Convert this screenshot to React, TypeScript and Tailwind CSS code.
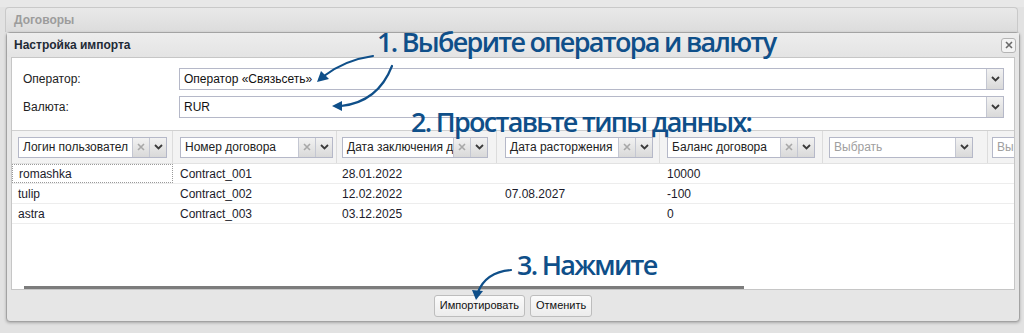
import React from "react";

const cols = [
  { w: 161, pad: 6, cw: 149, label: "Логин пользовател", clear: true },
  { w: 164, pad: 7, cw: 153, label: "Номер договора", clear: true },
  { w: 160, pad: 5, cw: 146, label: "Дата заключения д", clear: true },
  { w: 163, pad: 8, cw: 148, label: "Дата расторжения", clear: true },
  { w: 163, pad: 7, cw: 148, label: "Баланс договора", clear: true },
  { w: 165, pad: 6, cw: 144, label: "Выбрать", clear: false, ph: true },
  { w: 160, pad: 4, cw: 148, label: "Выбрать", clear: false, ph: true },
];

const rows = [
  ["romashka", "Contract_001", "28.01.2022", "", "10000"],
  ["tulip", "Contract_002", "12.02.2022", "07.08.2027", "-100"],
  ["astra", "Contract_003", "03.12.2025", "", "0"],
];

function Chevron() {
  return (
    <svg width="9" height="6" viewBox="0 0 9 6">
      <path d="M1 1 L4.5 4.5 L8 1" fill="none" stroke="#3a3a3a" strokeWidth="1.8" />
    </svg>
  );
}

function Cross({ c = "#a8a8a8" }: { c?: string }) {
  return (
    <svg width="8" height="8" viewBox="0 0 8 8">
      <path d="M1 1 L7 7 M7 1 L1 7" fill="none" stroke={c} strokeWidth="1.6" />
    </svg>
  );
}

function Trigger({ children }: { children: React.ReactNode }) {
  return (
    <div className="w-[17px] shrink-0 flex items-center justify-center bg-gradient-to-b from-[#f2f2f2] to-[#d9d9d9] border-l border-[#c4c7d2]">
      {children}
    </div>
  );
}

function Combo({ col }: { col: (typeof cols)[number] }) {
  return (
    <div
      className="flex h-[21px] border border-[#b5b8c8] bg-white overflow-hidden shrink-0"
      style={{ width: col.cw }}
    >
      <div
        className={
          "flex-1 min-w-0 pl-[4px] flex items-center whitespace-nowrap overflow-hidden text-[12px] " +
          (col.ph ? "text-[#a0a0a0]" : "text-[#222]")
        }
      >
        {col.label}
      </div>
      {col.clear && (
        <Trigger>
          <Cross />
        </Trigger>
      )}
      <Trigger>
        <Chevron />
      </Trigger>
    </div>
  );
}

function FormRow({ label, value }: { label: string; value: string }) {
  return (
    <div className="flex items-center h-[22px]">
      <div className="w-[167px] pl-[11px] text-[12px] text-[#222]">{label}</div>
      <div className="flex-1 flex h-[22px] border border-[#b5b8c8] bg-white mr-[10px]">
        <div className="flex-1 pl-[4px] flex items-center text-[12px] text-[#111]">{value}</div>
        <Trigger>
          <Chevron />
        </Trigger>
      </div>
    </div>
  );
}

const annot =
  "absolute text-[27px] font-semibold text-[#0f4f89] whitespace-nowrap leading-none tracking-[-1.7px]";

export default function App() {
  return (
    <div
      className="relative w-[1024px] h-[333px] overflow-hidden bg-[#e2e2e2]"
      style={{ fontFamily: '"Liberation Sans", Arial, sans-serif' }}
    >
      <div className="h-[7px] bg-[#e8e8e8]" />
      {/* outer panel header */}
      <div className="ml-[5px] mr-[6px] h-[25px] rounded-t-[4px] border border-[#c9c9c9] border-b-0 bg-gradient-to-b from-[#e9e9e9] to-[#dcdcdc] flex items-center pl-[8px]">
        <span className="text-[12px] font-bold text-[#9c9c9c]">Договоры</span>
      </div>
      {/* dialog */}
      <div className="ml-[6px] mr-[4px] h-[290px] flex flex-col rounded-[4px] border border-[#a3a3a3] bg-[#e6e6e6] shadow-[0_1px_3px_rgba(0,0,0,0.25)]">
        <div className="h-[24px] flex items-center justify-between pl-[7px] pr-[3px] bg-gradient-to-b from-[#ededed] to-[#e4e4e4]">
          <span className="text-[12px] font-bold text-[#1e2a36]">Настройка импорта</span>
          <div className="w-[15px] h-[15px] rounded-[3px] border border-[#b4b4b4] bg-[#f4f4f4] flex items-center justify-center">
            <Cross c="#6a6a6a" />
          </div>
        </div>
        <div className="flex-1 mx-[4px] flex flex-col bg-white border border-[#c6c6c6] overflow-hidden">
          <div className="pt-[10px] flex flex-col gap-[6px]">
            <FormRow label="Оператор:" value="Оператор «Связьсеть»" />
            <FormRow label="Валюта:" value="RUR" />
          </div>
          {/* grid */}
          <div className="mt-[12px] border-t border-[#d0d0d0] flex flex-col">
            <div className="flex h-[33px] bg-[#f3f3f3] border-b border-[#e2e2e2]">
              {cols.map((c, i) => (
                <div
                  key={i}
                  className="shrink-0 flex items-center border-r border-[#dcdcdc]"
                  style={{ width: c.w, paddingLeft: c.pad }}
                >
                  <Combo col={c} />
                </div>
              ))}
            </div>
            {rows.map((r, ri) => (
              <div key={ri} className="flex h-[20px] border-b border-[#ededed]">
                {cols.map((c, i) => (
                  <div
                    key={i}
                    className={
                      "shrink-0 flex items-center text-[12px] text-[#1b1b2b] whitespace-nowrap " +
                      (ri === 0 && i === 0 ? "border border-dotted border-[#9a9a9a]" : "")
                    }
                    style={{ width: c.w, paddingLeft: c.pad }}
                  >
                    {r[i] ?? ""}
                  </div>
                ))}
              </div>
            ))}
          </div>
          <div className="flex-1" />
          <div className="h-[3px] ml-[12px] w-[720px] bg-[#7c7c7c]" />
        </div>
        <div className="h-[31px] flex items-center justify-center gap-[5px]">
          <button className="h-[22px] px-[5px] rounded-[3px] border border-[#bdbdbd] bg-gradient-to-b from-[#fbfbfb] to-[#ececec] text-[11px] text-[#111]">
            Импортировать
          </button>
          <button className="h-[22px] px-[5px] rounded-[3px] border border-[#bdbdbd] bg-gradient-to-b from-[#fbfbfb] to-[#ececec] text-[11px] text-[#111]">
            Отменить
          </button>
        </div>
      </div>

      {/* annotations */}
      <div className={annot + " left-[377px] top-[28px]"} style={{ fontFamily: '"Open Sans", sans-serif' }}>
        1. Выберите оператора и валюту
      </div>
      <div className={annot + " left-[411px] top-[108px]"} style={{ fontFamily: '"Open Sans", sans-serif' }}>
        2. Проставьте типы данных:
      </div>
      <div className={annot + " left-[517px] top-[251px]"} style={{ fontFamily: '"Open Sans", sans-serif' }}>
        3. Нажмите
      </div>
      <svg className="absolute left-0 top-0 pointer-events-none" width="1024" height="333">
        <g fill="none" stroke="#0f4f89" strokeWidth="2.2" strokeLinecap="round">
          <path d="M373 56 Q 345 60 324 76" />
          <path d="M392 66 Q 378 102 341 106" />
          <path d="M511 270 Q 486 272 478 292" />
        </g>
        <g fill="#0f4f89">
          <polygon points="317,82 321,71 329,79" />
          <polygon points="332,106 342,101 342,111" />
          <polygon points="476,300 472,290 483,291" />
        </g>
      </svg>
    </div>
  );
}
